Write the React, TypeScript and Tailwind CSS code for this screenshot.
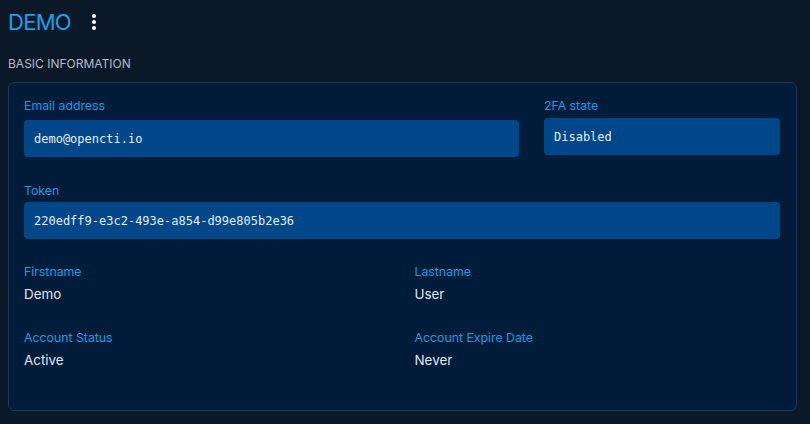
import React from "react";

const sans = "font-['Inter','Noto_Sans',sans-serif]";
const mono = "font-['DejaVu_Sans_Mono','Liberation_Mono',monospace]";

function ReadField({ label, value, gap }: { label: string; value: string; gap: string }) {
  return (
    <div className="flex flex-col">
      <label className="block text-[12.3px] leading-[16px] text-[#1a9be0]">{label}</label>
      <div className={`${gap} h-[37px] rounded-[4px] bg-[#00478a] px-[10px] flex items-center text-[12px] text-[#e6edf5] ${mono}`}>
        {value}
      </div>
    </div>
  );
}

function Info({ label, value }: { label: string; value: string }) {
  return (
    <div className="flex flex-col">
      <span className="text-[12.3px] leading-[16px] text-[#1a9be0]">{label}</span>
      <span className="mt-[4px] text-[13.4px] leading-[20px] text-[#e3e8ee]">{value}</span>
    </div>
  );
}

export default function App() {
  return (
    <div className={`w-[810px] h-[424px] bg-[#0b1828] ${sans} overflow-hidden`}>
      <div className="px-[8px] pt-[8px]">
        <div className="flex items-center h-[28px]">
          <h1 className="text-[22px] leading-[28px] text-[#16a3ea] tracking-[-0.7px]">DEMO</h1>
          <button className="ml-[13px] w-[20px] h-[28px] flex items-center justify-center">
            <svg width="6" height="18" viewBox="0 0 6 18">
              <circle cx="3" cy="3" r="2" fill="#ffffff" />
              <circle cx="3" cy="9" r="2" fill="#ffffff" />
              <circle cx="3" cy="15" r="2" fill="#ffffff" />
            </svg>
          </button>
        </div>
        <h2 className="mt-[20px] text-[12px] leading-[16px] uppercase text-[#b4bcc6]">Basic information</h2>
        <div className="mt-[10px] w-[789px] h-[329px] rounded-[6px] border border-[#1d3857] bg-[#001c3b] pl-[15px] pr-[16px] pt-[15px]">
          <div className="grid grid-cols-[495px_1fr] gap-x-[25px] items-start">
            <ReadField label="Email address" value="demo@opencti.io" gap="mt-[6px]" />
            <ReadField label="2FA state" value="Disabled" gap="mt-[4px]" />
          </div>
          <div className="mt-[26px]">
            <ReadField label="Token" value="220edff9-e3c2-493e-a854-d99e805b2e36" gap="mt-[3px]" />
          </div>
          <div className="mt-[25px] grid grid-cols-2 gap-x-[25px] gap-y-[26px]">
            <Info label="Firstname" value="Demo" />
            <Info label="Lastname" value="User" />
            <Info label="Account Status" value="Active" />
            <Info label="Account Expire Date" value="Never" />
          </div>
        </div>
      </div>
    </div>
  );
}
